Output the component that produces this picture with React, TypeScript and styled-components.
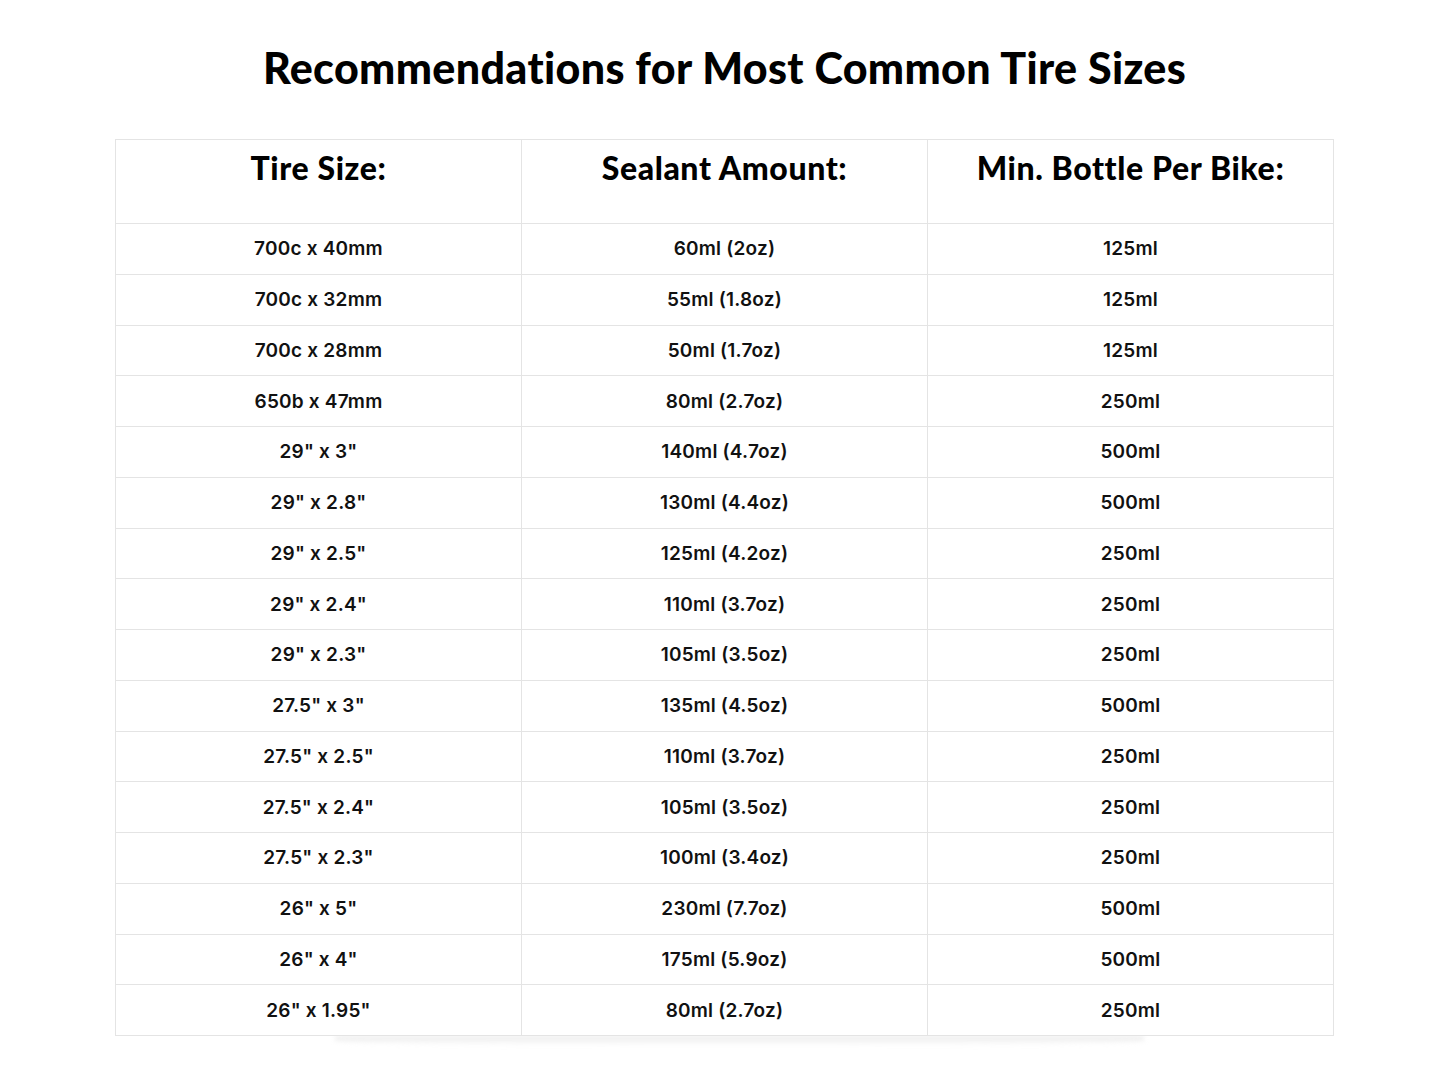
import React from 'react';
import styled, { createGlobalStyle } from 'styled-components';

const GlobalStyle = createGlobalStyle`
  html, body {
    margin: 0;
    padding: 0;
    background: #ffffff;
  }
  body {
    font-family: Inter, "Liberation Sans", Arial, sans-serif;
    color: #111;
  }
`;

const Page = styled.div`
  width: 1219px;
  margin-left: 115px;
  padding-top: 40px;
  padding-bottom: 40px;
`;

const Title = styled.h1`
  margin: 0 0 43px;
  text-align: center;
  font-family: Lato, "DejaVu Sans", sans-serif;
  font-weight: 900;
  font-size: 43px;
  line-height: 56px;
  letter-spacing: 0.35px;
  color: #000;
`;

const TableWrap = styled.div`
  position: relative;
  &::after {
    content: '';
    position: absolute;
    left: 220px;
    right: 190px;
    bottom: -10px;
    height: 10px;
    background: linear-gradient(to bottom, #ececec, rgba(255, 255, 255, 0));
    border-radius: 0 0 50% 50%;
    filter: blur(2px);
  }
`;

const Table = styled.table`
  position: relative;
  z-index: 1;
  width: 100%;
  border-collapse: collapse;
  table-layout: fixed;
  background: #fff;
  border: 1px solid #e4e4e4;
`;

const HeadCell = styled.th`
  padding: 10px 8px 37px;
  vertical-align: top;
  text-align: center;
  font-family: Lato, "DejaVu Sans", sans-serif;
  font-weight: 900;
  font-size: 32px;
  line-height: 36px;
  letter-spacing: 0.6px;
  color: #000;
  border: 1px solid #e4e4e4;
`;

const Cell = styled.td`
  height: 49.75px;
  padding: 0 8px;
  text-align: center;
  vertical-align: middle;
  font-size: 19px;
  font-weight: 600;
  letter-spacing: 0.2px;
  color: #111;
  border: 1px solid #e4e4e4;
`;

const rows: [string, string, string][] = [
  ['700c x 40mm', '60ml (2oz)', '125ml'],
  ['700c x 32mm', '55ml (1.8oz)', '125ml'],
  ['700c x 28mm', '50ml (1.7oz)', '125ml'],
  ['650b x 47mm', '80ml (2.7oz)', '250ml'],
  ['29" x 3"', '140ml (4.7oz)', '500ml'],
  ['29" x 2.8"', '130ml (4.4oz)', '500ml'],
  ['29" x 2.5"', '125ml (4.2oz)', '250ml'],
  ['29" x 2.4"', '110ml (3.7oz)', '250ml'],
  ['29" x 2.3"', '105ml (3.5oz)', '250ml'],
  ['27.5" x 3"', '135ml (4.5oz)', '500ml'],
  ['27.5" x 2.5"', '110ml (3.7oz)', '250ml'],
  ['27.5" x 2.4"', '105ml (3.5oz)', '250ml'],
  ['27.5" x 2.3"', '100ml (3.4oz)', '250ml'],
  ['26" x 5"', '230ml (7.7oz)', '500ml'],
  ['26" x 4"', '175ml (5.9oz)', '500ml'],
  ['26" x 1.95"', '80ml (2.7oz)', '250ml'],
];

export default function App() {
  return (
    <>
      <GlobalStyle />
      <Page>
        <Title>Recommendations for Most Common Tire Sizes</Title>
        <TableWrap>
          <Table>
            <thead>
              <tr>
                <HeadCell>Tire Size:</HeadCell>
                <HeadCell>Sealant Amount:</HeadCell>
                <HeadCell>Min. Bottle Per Bike:</HeadCell>
              </tr>
            </thead>
            <tbody>
              {rows.map(([size, sealant, bottle]) => (
                <tr key={size}>
                  <Cell>{size}</Cell>
                  <Cell>{sealant}</Cell>
                  <Cell>{bottle}</Cell>
                </tr>
              ))}
            </tbody>
          </Table>
        </TableWrap>
      </Page>
    </>
  );
}
